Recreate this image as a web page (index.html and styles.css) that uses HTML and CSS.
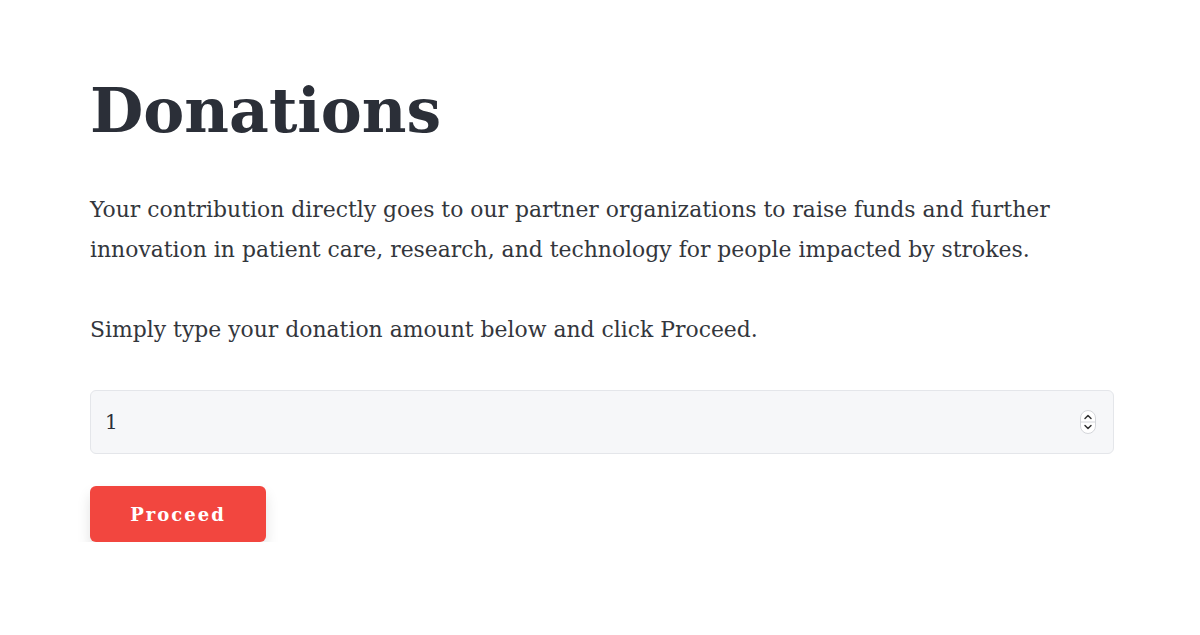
FILE: index.html
```html
<!DOCTYPE html>
<html lang="en">
<head>
<meta charset="utf-8">
<title>Donations</title>
<link rel="stylesheet" href="styles.css">
</head>
<body>
<main class="page">
  <h1 class="title">Donations</h1>
  <p class="lead">Your contribution directly goes to our partner organizations to raise funds and further innovation in patient care, research, and technology for people impacted by strokes.</p>
  <p class="lead">Simply type your donation amount below and click Proceed.</p>
  <form class="donate" onsubmit="return false;">
    <div class="field">
      <input class="amount" type="text" value="1" aria-label="Donation amount">
      <span class="spinner" aria-hidden="true">
        <svg width="16" height="24" viewBox="0 0 16 24">
          <rect x="0.5" y="0.5" width="15" height="23" rx="7.5" fill="#ffffff" stroke="#d4d6da"/>
          <line x1="1" y1="12" x2="15" y2="12" stroke="#d4d6da"/>
          <path d="M5 8.5 L8 5.5 L11 8.5" fill="none" stroke="#333" stroke-width="1.5" stroke-linecap="round" stroke-linejoin="round"/>
          <path d="M5 15.5 L8 18.5 L11 15.5" fill="none" stroke="#333" stroke-width="1.5" stroke-linecap="round" stroke-linejoin="round"/>
        </svg>
      </span>
    </div>
    <button class="proceed" type="submit">Proceed</button>
  </form>
</main>
</body>
</html>
```
FILE: styles.css
```css
html, body {
  margin: 0;
  padding: 0;
  background: #ffffff;
}
.page {
  padding: 71px 86px 0 90px;
  font-family: "DejaVu Serif", "Liberation Serif", serif;
  color: #333740;
}
.title {
  margin: 0 0 39px;
  font-size: 61.5px;
  line-height: 80px;
  font-weight: 700;
  color: #2b2f38;
}
.lead {
  margin: 0 0 40px;
  font-size: 21.9px;
  line-height: 40px;
  color: #33363c;
}
.donate {
  display: flex;
  flex-direction: column;
  align-items: flex-start;
  gap: 32px;
}
.field {
  box-sizing: border-box;
  width: 1024px;
  height: 64px;
  display: flex;
  align-items: center;
  padding: 0 17px 0 14px;
  background: #f6f7f9;
  border: 1px solid #e4e6ea;
  border-radius: 6px;
}
.amount {
  flex: 1;
  border: 0;
  outline: 0;
  background: transparent;
  padding: 0;
  font-family: "DejaVu Serif", serif;
  font-size: 20px;
  color: #2b2f38;
}
.spinner {
  display: flex;
}
.proceed {
  width: 176px;
  height: 56px;
  border: 0;
  border-radius: 6px;
  background: #f2463f;
  color: #ffffff;
  font-family: "DejaVu Serif", serif;
  font-weight: 700;
  font-size: 18px;
  letter-spacing: 2px;
  box-shadow: 0 8px 14px rgba(0, 0, 0, 0.12);
  cursor: pointer;
}
```
